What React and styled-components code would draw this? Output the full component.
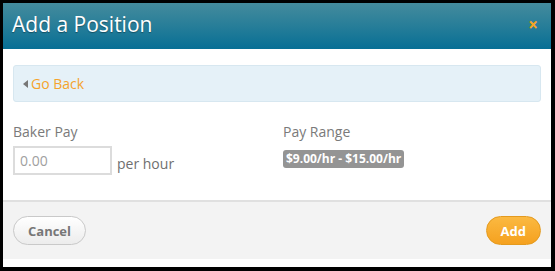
import styled, { createGlobalStyle } from "styled-components";

const GlobalStyle = createGlobalStyle`
  html, body {
    margin: 0;
    padding: 0;
    background: #000;
    font-family: "Open Sans", "Liberation Sans", sans-serif;
  }
`;

const Modal = styled.div`
  margin: 3px 4px 0 3px;
  height: 264px;
  background: #fff;
  display: flex;
  flex-direction: column;
`;

const Header = styled.div`
  height: 46px;
  display: flex;
  align-items: center;
  justify-content: space-between;
  padding: 0 13px 4px 9px;
  box-sizing: border-box;
  background: linear-gradient(to bottom, #448b9d 0%, #2a7f99 45%, #076f95 100%);
`;

const Title = styled.h1`
  margin: 0;
  font-size: 21px;
  font-weight: 400;
  color: #fff;
  text-shadow: 0 1px 1px rgba(0, 0, 0, 0.35);
`;

const Close = styled.span`
  color: #f5a623;
  font-size: 17px;
  font-weight: 700;
  line-height: 1;
  cursor: pointer;
`;

const Body = styled.div`
  padding: 16px 10px 0;
  height: 135px;
`;

const BackBar = styled.div`
  height: 35px;
  display: flex;
  align-items: center;
  padding-left: 9px;
  gap: 3px;
  background: #e5f1f8;
  border: 1px solid #d7e7f0;
  border-radius: 3px;
`;

const Caret = styled.span`
  width: 0;
  height: 0;
  border-top: 4px solid transparent;
  border-bottom: 4px solid transparent;
  border-right: 5px solid #777;
`;

const BackLink = styled.a`
  color: #f5a32c;
  font-size: 14px;
  cursor: pointer;
`;

const Fields = styled.div`
  display: grid;
  grid-template-columns: 270px 1fr;
  margin-top: 20px;
`;

const Field = styled.div`
  display: flex;
  flex-direction: column;
`;

const Label = styled.label`
  font-size: 14px;
  color: #7a7a7a;
  line-height: 20px;
  margin-bottom: ${(p) => p.gap || 4}px;
`;

const InputRow = styled.div`
  display: flex;
  align-items: flex-end;
  gap: 5px;
`;

const Input = styled.input`
  box-sizing: border-box;
  width: 99px;
  height: 29px;
  border: 2px solid #dcdcdc;
  padding: 0 5px;
  font-family: inherit;
  font-size: 14px;
  color: #999;
  outline: none;

  &::placeholder {
    color: #a0a0a0;
  }
`;

const Unit = styled.span`
  font-size: 14px;
  color: #6f6f6f;
  margin-bottom: 2px;
`;

const Badge = styled.span`
  align-self: flex-start;
  background: #949494;
  color: #fff;
  font-size: 12px;
  font-weight: 700;
  line-height: 18px;
  padding: 0 3px;
  border-radius: 3px;
`;

const Footer = styled.div`
  height: 57px;
  border-top: 2px solid #e0e0e0;
  background: #f3f3f3;
  display: flex;
  align-items: center;
  justify-content: space-between;
  padding: 0 10px;
`;

const Button = styled.button`
  box-sizing: border-box;
  height: 29px;
  padding: 0 ${(p) => (p.primary ? 14 : 14)}px;
  border-radius: 15px;
  font-family: inherit;
  font-size: 13px;
  font-weight: 700;
  cursor: pointer;
  border: 1px solid ${(p) => (p.primary ? "#e49a1e" : "#c9c9c9")};
  color: ${(p) => (p.primary ? "#fff" : "#777")};
  background: ${(p) =>
    p.primary
      ? "linear-gradient(to bottom, #fbb941, #f5a11f)"
      : "linear-gradient(to bottom, #ffffff, #ececec)"};
`;

const App = () => {
  return (
    <>
      <GlobalStyle />
      <Modal>
        <Header>
          <Title>Add a Position</Title>
          <Close>×</Close>
        </Header>
        <Body>
          <BackBar>
            <Caret />
            <BackLink>Go Back</BackLink>
          </BackBar>
          <Fields>
            <Field>
              <Label>Baker Pay</Label>
              <InputRow>
                <Input placeholder="0.00" />
                <Unit>per hour</Unit>
              </InputRow>
            </Field>
            <Field>
              <Label gap={8}>Pay Range</Label>
              <Badge>$9.00/hr - $15.00/hr</Badge>
            </Field>
          </Fields>
        </Body>
        <Footer>
          <Button>Cancel</Button>
          <Button primary>Add</Button>
        </Footer>
      </Modal>
    </>
  );
};

export default App;
